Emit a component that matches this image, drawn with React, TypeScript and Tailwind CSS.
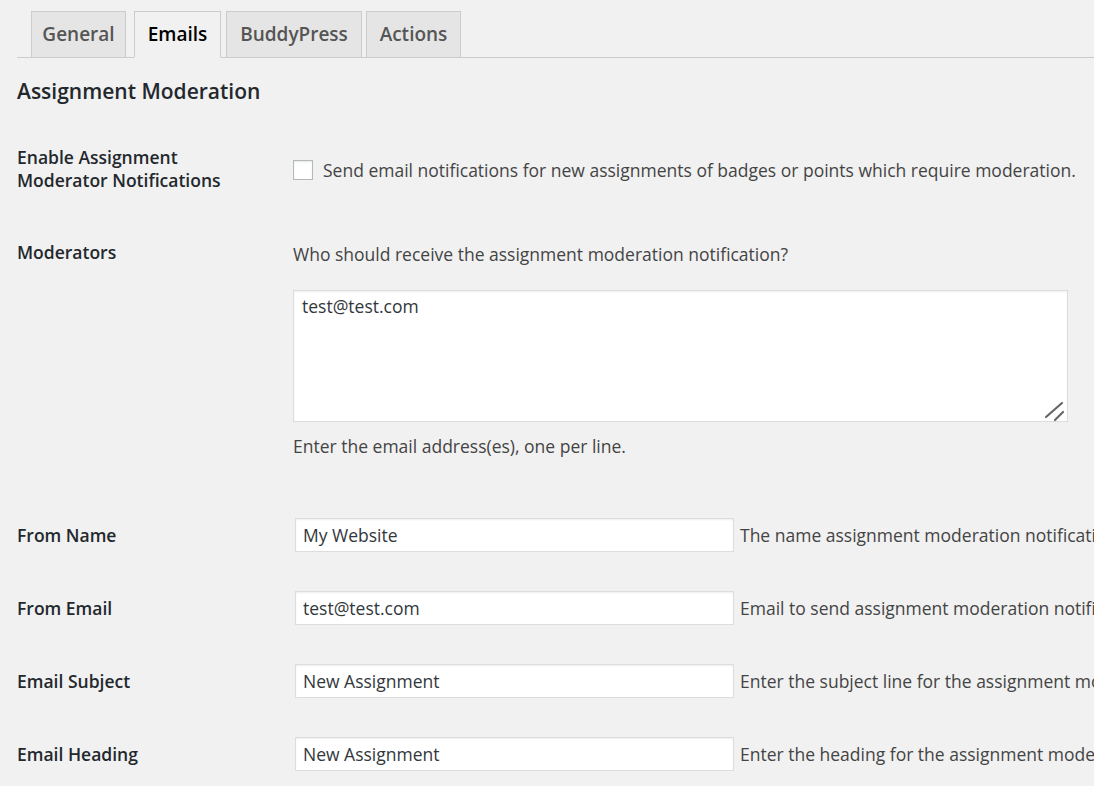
import React from "react";

const tabs = [
  { label: "General", active: false, cls: "ml-[14px] w-[95px]" },
  { label: "Emails", active: true, cls: "ml-[8px] w-[87px]" },
  { label: "BuddyPress", active: false, cls: "ml-[5px] w-[136px]" },
  { label: "Actions", active: false, cls: "ml-[4px] w-[95px]" },
];

const fields = [
  {
    label: "From Name",
    value: "My Website",
    help: "The name assignment moderation notifications should be sent from.",
  },
  {
    label: "From Email",
    value: "test@test.com",
    help: "Email to send assignment moderation notifications from.",
  },
  {
    label: "Email Subject",
    value: "New Assignment",
    help: "Enter the subject line for the assignment moderation email.",
  },
  {
    label: "Email Heading",
    value: "New Assignment",
    help: "Enter the heading for the assignment moderation email.",
  },
];

export default function App() {
  return (
    <div className="h-[786px] w-[1094px] overflow-hidden bg-[#f1f1f1] pl-[17px] font-['Open_Sans',sans-serif] text-[17.5px] text-[#444]">
      {/* tabs */}
      <nav className="flex items-end border-b border-[#ccc] pt-[11px]">
        {tabs.map((t) => (
          <span
            key={t.label}
            className={
              t.active
                ? `${t.cls} -mb-px flex h-[47px] shrink-0 items-center justify-center border border-[#ccc] border-b-[#f1f1f1] bg-[#f1f1f1] text-[19px] font-semibold text-black`
                : `${t.cls} flex h-[46px] shrink-0 items-center justify-center border border-[#ccc] border-b-0 bg-[#e5e5e5] text-[19px] font-semibold text-[#555]`
            }
          >
            {t.label}
          </span>
        ))}
      </nav>

      <h2 className="mt-[19px] text-[21px] leading-[28px] font-semibold text-[#23282d]">
        Assignment Moderation
      </h2>

      {/* enable checkbox */}
      <div className="mt-[41px] flex">
        <div className="w-[276px] shrink-0 text-[17.5px] leading-[23px] font-semibold text-[#23282d]">
          Enable Assignment
          <br />
          Moderator Notifications
        </div>
        <label className="mt-[14px] flex h-[20px] items-center gap-[10px] whitespace-nowrap text-[17.5px] text-[#444]">
          <input
            type="checkbox"
            className="h-[20px] w-[20px] shrink-0 appearance-none border border-[#b4b9be] bg-white shadow-[inset_0_1px_2px_rgba(0,0,0,0.1)]"
          />
          Send email notifications for new assignments of badges or points which require moderation.
        </label>
      </div>

      {/* moderators */}
      <div className="mt-[49px] flex">
        <div className="w-[276px] shrink-0 text-[17.5px] leading-[23px] font-semibold text-[#23282d]">
          Moderators
        </div>
        <div className="flex flex-col pt-[2px]">
          <p className="whitespace-nowrap text-[17.5px] leading-[23px] text-[#444]">
            Who should receive the assignment moderation notification?
          </p>
          <div className="relative mt-[24px] h-[132px] w-[775px]">
            <textarea
              defaultValue="test@test.com"
              className="h-full w-full resize-none border border-[#ddd] bg-white px-[8px] py-[4px] text-[17.5px] leading-[22px] text-[#32373c] shadow-[inset_0_1px_2px_rgba(0,0,0,0.07)] outline-none"
            />
            {/* resize grip */}
            <svg
              className="pointer-events-none absolute bottom-0 right-[2px]"
              width="22"
              height="22"
              viewBox="0 0 22 22"
            >
              <path d="M2 17 L18 3" stroke="#666" strokeWidth="2.2" strokeLinecap="round" />
              <path d="M11 20 L19 12" stroke="#666" strokeWidth="2.2" strokeLinecap="round" />
            </svg>
          </div>
          <p className="mt-[13px] whitespace-nowrap text-[17.5px] leading-[23px] text-[#444]">
            Enter the email address(es), one per line.
          </p>
        </div>
      </div>

      {/* text fields */}
      <div className="mt-[60px] flex flex-col gap-[39px]">
        {fields.map((f) => (
          <div key={f.label} className="flex items-center">
            <div className="w-[276px] shrink-0 text-[17.5px] leading-[23px] font-semibold text-[#23282d]">
              {f.label}
            </div>
            <div className="flex items-center gap-[6px] whitespace-nowrap pl-[2px]">
              <input
                type="text"
                defaultValue={f.value}
                className="h-[34px] w-[439px] shrink-0 border border-[#ddd] bg-white px-[7px] text-[17.5px] text-[#32373c] shadow-[inset_0_1px_2px_rgba(0,0,0,0.07)] outline-none"
              />
              <span className="text-[17.5px] text-[#444]">{f.help}</span>
            </div>
          </div>
        ))}
      </div>
    </div>
  );
}
